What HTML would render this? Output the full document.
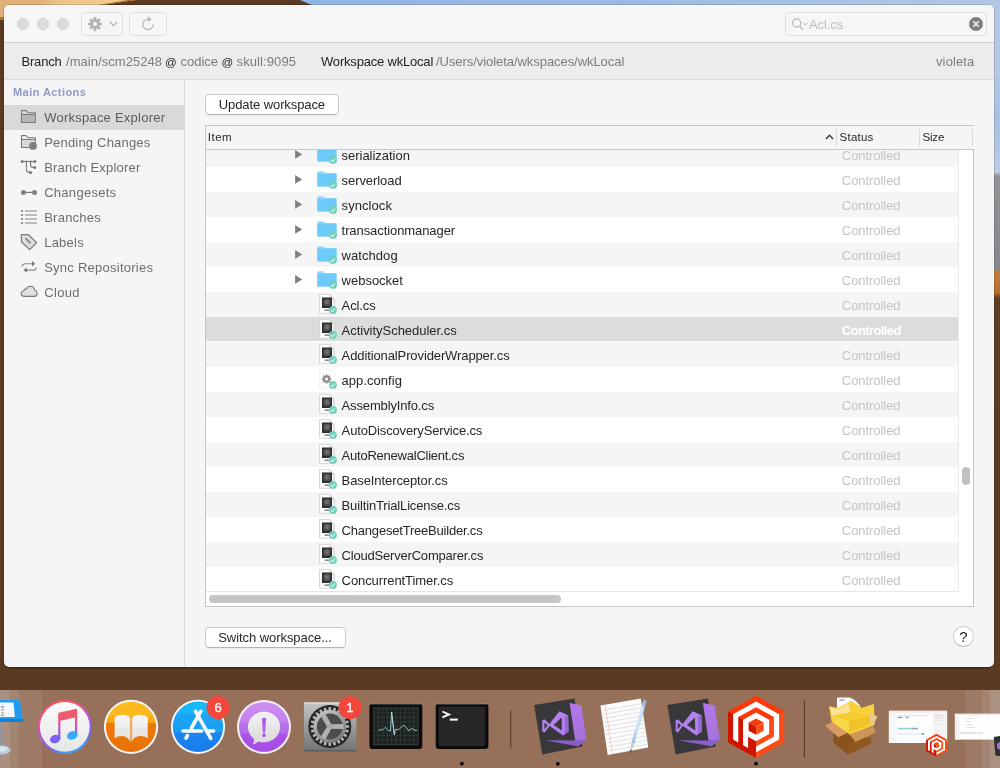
<!DOCTYPE html>
<html>
<head>
<meta charset="utf-8">
<title>Plastic SCM</title>
<style>
*{box-sizing:border-box;margin:0;padding:0}
html,body{width:1000px;height:768px;overflow:hidden}
body{font-family:"Liberation Sans",sans-serif;font-size:13px;color:#262626;background:#5a3a23;position:relative}
.abs,.t{position:absolute}
.t{white-space:pre}
#root{position:absolute;left:0;top:0;width:1000px;height:768px;will-change:transform}
svg{position:absolute;overflow:visible}

</style>
</head>
<body>
<div id="root">

<div class="abs" style="left:0;top:0;width:1000px;height:26px;background:linear-gradient(90deg,#e0ad77 0,#e1af7a 40px,#ecc58b 60px,#efc98f 100px,#f0cb92 135px)"></div>
<div class="abs" style="left:296px;top:0;width:704px;height:26px;background:linear-gradient(90deg,#90b4e1 0,#9dbbe2 314px,#a9c2e3 534px,#b3c7e4 704px)"></div>
<svg style="left:0;top:0" width="1000" height="26"><polygon points="136,0 300,0 314,6 96,6" fill="#5a3a23"/><polygon points="136,0 128,0 92,6 96,6" fill="#a8691f"/></svg>
<div class="abs" style="left:0;top:19px;width:8px;height:680px;background:#5a3a23"></div>
<div class="abs" style="left:0;top:17px;width:8px;height:3px;background:#b07820"></div>
<div class="abs" style="left:988px;top:0;width:12px;height:700px;background:linear-gradient(180deg,#b3c7e4 0,#b6c9e5 70px,#a9c0e0 120px,#bccde7 172px,#939296 176px,#87868b 268px,#c27c38 273px,#b56d2b 293px,#5e3d25 298px,#5a3a23 700px)"></div>
<div class="abs" style="left:0;top:655px;width:1000px;height:35px;background:#5b3a23"></div>
<div class="abs" style="left:5px;top:664px;width:988px;height:4.5px;border-radius:0 0 6px 6px;background:#4a2d19"></div>

<div class="abs" style="left:4px;top:5px;width:990px;height:662px;background:#f5f5f5;border-radius:5px;box-shadow:0 0 0 0.5px rgba(0,0,0,.25)"></div>
<div class="abs" style="left:4px;top:5px;width:990px;height:37px;background:#f6f6f6;border-radius:5px 5px 0 0"></div>
<div class="abs" style="left:4px;top:42px;width:990px;height:1px;background:#d1d1d1"></div>
<div class="abs" style="left:17px;top:18px;width:12px;height:12px;border-radius:50%;background:#dcdddd;border:1px solid #d1d2d2"></div>
<div class="abs" style="left:37px;top:18px;width:12px;height:12px;border-radius:50%;background:#dcdddd;border:1px solid #d1d2d2"></div>
<div class="abs" style="left:57px;top:18px;width:12px;height:12px;border-radius:50%;background:#dcdddd;border:1px solid #d1d2d2"></div>
<div class="abs" style="left:81px;top:12px;width:42px;height:24px;border:1px solid #dfdfdf;border-radius:5px;background:#f6f6f6"></div>
<div class="abs" style="left:129px;top:12px;width:38px;height:24px;border:1px solid #dfdfdf;border-radius:5px;background:#f6f6f6"></div>
<svg style="left:88px;top:17px" width="14" height="14" viewBox="-7 -7 14 14"><g fill="#b4b4b4"><rect x="-1.3" y="-7" width="2.6" height="4" transform="rotate(0)"/><rect x="-1.3" y="-7" width="2.6" height="4" transform="rotate(45)"/><rect x="-1.3" y="-7" width="2.6" height="4" transform="rotate(90)"/><rect x="-1.3" y="-7" width="2.6" height="4" transform="rotate(135)"/><rect x="-1.3" y="-7" width="2.6" height="4" transform="rotate(180)"/><rect x="-1.3" y="-7" width="2.6" height="4" transform="rotate(225)"/><rect x="-1.3" y="-7" width="2.6" height="4" transform="rotate(270)"/><rect x="-1.3" y="-7" width="2.6" height="4" transform="rotate(315)"/><circle r="4.9"/></g><circle r="2" fill="#f6f6f6"/></svg>
<svg style="left:109px;top:21px" width="9" height="6" viewBox="0 0 9 6"><path d="M0.8 0.8 L4.5 4.6 L8.2 0.8" fill="none" stroke="#b0b0b0" stroke-width="1.3"/></svg>
<svg style="left:141px;top:16px" width="14" height="15" viewBox="0 0 14 15"><path d="M7 3.2 A5.2 5.2 0 1 0 12.2 8.4" fill="none" stroke="#b4b4b4" stroke-width="1.1"/><path d="M6.8 0.6 L10.6 3.2 L6.8 5.8 Z" fill="#b4b4b4"/></svg>
<div class="abs" style="left:785px;top:12px;width:202px;height:24px;border:1px solid #dcdcdc;border-radius:5px;background:#f6f6f6"></div>
<svg style="left:791px;top:17px" width="18" height="14" viewBox="0 0 18 14"><circle cx="5.6" cy="6" r="4.1" fill="none" stroke="#b2b2b2" stroke-width="1.1"/><path d="M8.6 9.2 L12 12.6" stroke="#b2b2b2" stroke-width="1.2" fill="none"/><path d="M12.4 6 L14.4 8 L16.4 6" fill="none" stroke="#b2b2b2" stroke-width="1"/></svg>
<span class="t " style="left:809px;top:17px;font-size:13px;line-height:15px;letter-spacing:-0.074px;color:#bdbdbd;">Acl.cs</span>
<svg style="left:969px;top:17px" width="14" height="14" viewBox="0 0 14 14"><circle cx="7" cy="7" r="7" fill="#7f7f7f"/><path d="M4.3 4.3 L9.7 9.7 M9.7 4.3 L4.3 9.7" stroke="#f6f6f6" stroke-width="1.5"/></svg>
<div class="abs" style="left:4px;top:43px;width:990px;height:36px;background:#ececec"></div>
<div class="abs" style="left:4px;top:79px;width:990px;height:1px;background:#dbdbdb"></div>
<span class="t " style="left:21.5px;top:54px;font-size:13px;line-height:15px;letter-spacing:-0.201px;color:#222222;">Branch</span>
<span class="t " style="left:66px;top:54px;font-size:13px;line-height:15px;letter-spacing:0.047px;color:#7c7c7c;">/main/scm25248</span>
<span class="t " style="left:165px;top:54.5px;font-size:11.5px;line-height:15px;color:#222222;">@</span>
<span class="t " style="left:180.5px;top:54px;font-size:13px;line-height:15px;letter-spacing:0.004px;color:#7c7c7c;">codice</span>
<span class="t " style="left:221.5px;top:54.5px;font-size:11.5px;line-height:15px;color:#222222;">@</span>
<span class="t " style="left:236.6px;top:54px;font-size:13px;line-height:15px;letter-spacing:0.095px;color:#7c7c7c;">skull:9095</span>
<span class="t " style="left:321px;top:54px;font-size:13px;line-height:15px;letter-spacing:-0.192px;color:#222222;">Workspace wkLocal</span>
<span class="t " style="left:436px;top:54px;font-size:13px;line-height:15px;letter-spacing:-0.058px;color:#7c7c7c;">/Users/violeta/wkspaces/wkLocal</span>
<span class="t " style="left:936px;top:54px;font-size:13px;line-height:15px;letter-spacing:0.120px;color:#7c7c7c;">violeta</span>
<div class="abs" style="left:184px;top:80px;width:1px;height:587px;background:#dcdcdc"></div>
<div class="abs" style="left:4px;top:105px;width:180px;height:25px;background:#d9d9d9"></div>
<span class="t " style="left:13px;top:84.5px;font-size:11px;line-height:15px;letter-spacing:0.441px;color:#9199c7;font-weight:700;">Main Actions</span>
<span class="t " style="left:44.2px;top:110px;font-size:13px;line-height:15px;letter-spacing:0.235px;color:#5c5c5c;">Workspace Explorer</span>
<span class="t " style="left:44.2px;top:135px;font-size:13px;line-height:15px;letter-spacing:0.196px;color:#6d6d6d;">Pending Changes</span>
<span class="t " style="left:44.2px;top:160px;font-size:13px;line-height:15px;letter-spacing:0.213px;color:#6d6d6d;">Branch Explorer</span>
<span class="t " style="left:44.2px;top:185px;font-size:13px;line-height:15px;letter-spacing:0.279px;color:#6d6d6d;">Changesets</span>
<span class="t " style="left:44.2px;top:210px;font-size:13px;line-height:15px;letter-spacing:0.240px;color:#6d6d6d;">Branches</span>
<span class="t " style="left:44.2px;top:235px;font-size:13px;line-height:15px;letter-spacing:0.237px;color:#6d6d6d;">Labels</span>
<span class="t " style="left:44.2px;top:260px;font-size:13px;line-height:15px;letter-spacing:0.251px;color:#6d6d6d;">Sync Repositories</span>
<span class="t " style="left:44.2px;top:285px;font-size:13px;line-height:15px;letter-spacing:0.345px;color:#6d6d6d;">Cloud</span>
<svg style="left:20px;top:109px" width="18" height="16" viewBox="0 0 18 16"><path d="M1.5 1.6 L5.8 1.6 L8.2 3.7 L15.4 3.7 L15.4 13.4 L1.5 13.4 Z" fill="#dfdfdf" stroke="#7a7a7a" stroke-width="1.1" stroke-linejoin="round"/><rect x="2" y="5.6" width="12.9" height="7.3" fill="#b4b6b5"/><path d="M1.5 5.4 L15.4 5.4" stroke="#7a7a7a" stroke-width="1.1"/></svg>
<svg style="left:20px;top:134px" width="18" height="16" viewBox="0 0 18 16"><path d="M1.5 1.6 L5.8 1.6 L8.2 3.7 L15.4 3.7 L15.4 13.4 L1.5 13.4 Z" fill="#fafafa" stroke="#7a7a7a" stroke-width="1.1" stroke-linejoin="round"/><rect x="2" y="5.6" width="12.9" height="7.3" fill="#d6d6d6"/><path d="M1.5 5.4 L15.4 5.4" stroke="#7a7a7a" stroke-width="1.1"/><circle cx="13" cy="11.9" r="3.9" fill="#808080"/></svg>
<svg style="left:20px;top:155px" width="18" height="20" viewBox="0 0 18 20"><g fill="none" stroke="#7a7a7a" stroke-width="1.1"><path d="M2.1 6.5 L14.8 6.5"/><path d="M6.4 6.5 L6.4 14.6 Q6.4 17.4 9.4 17.4 L10.6 17.4"/><path d="M10.6 6.5 L10.6 10.2 Q10.6 12.4 13 12.4 L14.7 12.4"/></g><g fill="#7a7a7a"><circle cx="2.2" cy="6.5" r="1.5"/><circle cx="14.8" cy="6.5" r="1.5"/><circle cx="6.4" cy="6.5" r="1"/><circle cx="10.6" cy="6.5" r="1"/><circle cx="14.7" cy="12.4" r="1.5"/><circle cx="10.6" cy="17.4" r="1.5"/></g></svg>
<svg style="left:20px;top:185px" width="18" height="14" viewBox="0 0 18 14"><path d="M3.4 7.4 L14.5 7.4" stroke="#7a7a7a" stroke-width="1.2"/><circle cx="3.4" cy="7.4" r="2.5" fill="#808080"/><circle cx="14.5" cy="7.4" r="2.5" fill="#808080"/></svg>
<svg style="left:20px;top:205px" width="18" height="22" viewBox="0 0 18 22"><rect x="1" y="5.1" width="1.9" height="1.8" fill="#858585"/><rect x="5" y="5.2" width="11.9" height="1.6" fill="#adadad"/><rect x="1" y="9.1" width="1.9" height="1.8" fill="#858585"/><rect x="5" y="9.2" width="11.9" height="1.6" fill="#adadad"/><rect x="1" y="13.1" width="1.9" height="1.8" fill="#858585"/><rect x="5" y="13.2" width="11.9" height="1.6" fill="#adadad"/><rect x="1" y="17.1" width="1.9" height="1.8" fill="#858585"/><rect x="5" y="17.2" width="11.9" height="1.6" fill="#adadad"/></svg>
<svg style="left:20px;top:230px" width="18" height="22" viewBox="0 0 18 22"><path d="M1.4 4.7 L8.4 4.7 L16.6 12.6 L9.6 19.6 L1.4 11.8 Z" fill="#dedede" stroke="#7a7a7a" stroke-width="1.2" stroke-linejoin="round"/><path d="M6.1 8.9 L10 12.6" stroke="#808080" stroke-width="1.7" stroke-linecap="round"/></svg>
<svg style="left:20px;top:255px" width="18" height="22" viewBox="0 0 18 22"><g fill="none" stroke="#8a8a8a" stroke-width="1.1"><path d="M2.2 11.6 Q2.4 8.8 5.4 8.8 L12.5 8.8"/><path d="M16.3 12.4 Q16.1 15.1 13.2 15.1 L6.4 15.1"/></g><path d="M12 6.1 L15.3 8.8 L12 11.5 Z" fill="#7a7a7a"/><path d="M6.8 12.4 L3.4 15.1 L6.8 17.8 Z" fill="#7a7a7a"/></svg>
<svg style="left:20px;top:280px" width="19" height="20" viewBox="0 0 19 20"><path d="M4 16.4 Q1.2 16.4 1.2 13.7 Q1.2 11.4 3.6 11 Q4 8.8 6.2 8.9 Q7.4 6.3 10.4 6.3 Q14 6.3 14.6 10.2 Q17.1 10.6 17.1 13.4 Q17.1 16.4 14.2 16.4 Z" fill="#e0e0e0" stroke="#7a7a7a" stroke-width="1.1" stroke-linejoin="round"/></svg>
<div class="abs" style="left:205px;top:94px;width:133.6px;height:20.6px;background:#fff;border:1px solid #c9c9c9;border-bottom-color:#b4b4b4;border-radius:4.5px;box-shadow:0 0.5px 0.5px rgba(0,0,0,.08)"></div>
<span class="t " style="left:218.8px;top:96.5px;font-size:13px;line-height:15px;letter-spacing:-0.091px;color:#262626;">Update workspace</span>
<div class="abs" style="left:205px;top:627.2px;width:140.8px;height:20.6px;background:#fff;border:1px solid #c9c9c9;border-bottom-color:#b4b4b4;border-radius:4.5px;box-shadow:0 0.5px 0.5px rgba(0,0,0,.08)"></div>
<span class="t " style="left:218.2px;top:629.7px;font-size:13px;line-height:15px;letter-spacing:-0.060px;color:#262626;">Switch workspace...</span>
<div class="abs" style="left:953px;top:626px;width:21px;height:21px;background:#fff;border:1px solid #cdcdcd;border-bottom-color:#b9b9b9;border-radius:50%"></div>
<span class="t " style="left:959.2px;top:627.9px;font-size:15px;line-height:17px;color:#262626;">?</span>
<div class="abs" style="left:205px;top:125px;width:769px;height:482px;background:#fff;border:1px solid #c6c6c6"></div>
<div class="abs" style="left:206px;top:126px;width:767px;height:23px;background:#f5f5f5"></div>
<div class="abs" style="left:206px;top:149px;width:767px;height:1px;background:#c9c9c9"></div>
<div class="abs" style="left:973px;top:126px;width:1px;height:23px;background:#f5f5f5"></div>
<div class="abs" style="left:836px;top:129px;width:1px;height:17px;background:#dadada"></div>
<div class="abs" style="left:919px;top:129px;width:1px;height:17px;background:#dadada"></div>
<div class="abs" style="left:972px;top:129px;width:1px;height:17px;background:#dadada"></div>
<span class="t " style="left:207.8px;top:130px;font-size:11.5px;line-height:14px;letter-spacing:0.475px;color:#262626;">Item</span>
<span class="t " style="left:839.6px;top:130px;font-size:11.5px;line-height:14px;letter-spacing:0.218px;color:#262626;">Status</span>
<span class="t " style="left:922.6px;top:130px;font-size:11.5px;line-height:14px;letter-spacing:-0.225px;color:#262626;">Size</span>
<svg style="left:825px;top:134px" width="9" height="6" viewBox="0 0 9 6"><path d="M1 5 L4.5 1.3 L8 5" fill="none" stroke="#3a3a3a" stroke-width="1.4"/></svg>
<div class="abs" style="left:206px;top:150px;width:752px;height:442px;overflow:hidden">
<svg width="0" height="0"><defs><radialGradient id="mon" cx="50%" cy="45%" r="65%"><stop offset="0" stop-color="#7a7a7a"/><stop offset="1" stop-color="#3c3c3c"/></radialGradient></defs></svg>
<div class="abs" style="left:0;top:-8px;width:752px;height:25px;background:#f5f5f5"></div>
<span class="t " style="left:135.60000000000002px;top:-2px;font-size:13px;line-height:15px;letter-spacing:-0.030px;color:#262626;">serialization</span>
<span class="t " style="left:635.8px;top:-2px;font-size:13px;line-height:15px;letter-spacing:-0.052px;color:#c4c4c4;">Controlled</span>
<svg style="left:89px;top:0px" width="8" height="10" viewBox="0 0 8 10"><path d="M0.1 0.1 L7.2 4.45 L0.1 8.8 Z" fill="#7e7e7e"/></svg>
<svg style="left:111px;top:-4px" width="21" height="20" viewBox="0 0 21 20"><path d="M0.3 1.2 Q0.3 0.2 1.3 0.2 L6.2 0.2 Q7 0.2 7.4 0.9 L8 2 L18.5 2 Q19.5 2 19.5 3 L19.5 14.4 Q19.5 15.4 18.5 15.4 L1.3 15.4 Q0.3 15.4 0.3 14.4 Z" fill="#9cdafa"/><path d="M0.3 2.6 L19.5 2.6 L19.5 14.4 Q19.5 15.4 18.5 15.4 L1.3 15.4 Q0.3 15.4 0.3 14.4 Z" fill="#6ccbf8"/><circle cx="16" cy="13.9" r="3.9" fill="#6ecfbb"/><path d="M13.9 14.1 l1.5 1.6 l2.7 -3.2" fill="none" stroke="#dcf7f0" stroke-width="1.05"/></svg>
<div class="abs" style="left:0;top:17px;width:752px;height:25px;background:#ffffff"></div>
<span class="t " style="left:135.60000000000002px;top:23px;font-size:13px;line-height:15px;letter-spacing:-0.073px;color:#262626;">serverload</span>
<span class="t " style="left:635.8px;top:23px;font-size:13px;line-height:15px;letter-spacing:-0.052px;color:#c4c4c4;">Controlled</span>
<svg style="left:89px;top:25px" width="8" height="10" viewBox="0 0 8 10"><path d="M0.1 0.1 L7.2 4.45 L0.1 8.8 Z" fill="#7e7e7e"/></svg>
<svg style="left:111px;top:21px" width="21" height="20" viewBox="0 0 21 20"><path d="M0.3 1.2 Q0.3 0.2 1.3 0.2 L6.2 0.2 Q7 0.2 7.4 0.9 L8 2 L18.5 2 Q19.5 2 19.5 3 L19.5 14.4 Q19.5 15.4 18.5 15.4 L1.3 15.4 Q0.3 15.4 0.3 14.4 Z" fill="#9cdafa"/><path d="M0.3 2.6 L19.5 2.6 L19.5 14.4 Q19.5 15.4 18.5 15.4 L1.3 15.4 Q0.3 15.4 0.3 14.4 Z" fill="#6ccbf8"/><circle cx="16" cy="13.9" r="3.9" fill="#6ecfbb"/><path d="M13.9 14.1 l1.5 1.6 l2.7 -3.2" fill="none" stroke="#dcf7f0" stroke-width="1.05"/></svg>
<div class="abs" style="left:0;top:42px;width:752px;height:25px;background:#f5f5f5"></div>
<span class="t " style="left:135.60000000000002px;top:48px;font-size:13px;line-height:15px;letter-spacing:0.063px;color:#262626;">synclock</span>
<span class="t " style="left:635.8px;top:48px;font-size:13px;line-height:15px;letter-spacing:-0.052px;color:#c4c4c4;">Controlled</span>
<svg style="left:89px;top:50px" width="8" height="10" viewBox="0 0 8 10"><path d="M0.1 0.1 L7.2 4.45 L0.1 8.8 Z" fill="#7e7e7e"/></svg>
<svg style="left:111px;top:46px" width="21" height="20" viewBox="0 0 21 20"><path d="M0.3 1.2 Q0.3 0.2 1.3 0.2 L6.2 0.2 Q7 0.2 7.4 0.9 L8 2 L18.5 2 Q19.5 2 19.5 3 L19.5 14.4 Q19.5 15.4 18.5 15.4 L1.3 15.4 Q0.3 15.4 0.3 14.4 Z" fill="#9cdafa"/><path d="M0.3 2.6 L19.5 2.6 L19.5 14.4 Q19.5 15.4 18.5 15.4 L1.3 15.4 Q0.3 15.4 0.3 14.4 Z" fill="#6ccbf8"/><circle cx="16" cy="13.9" r="3.9" fill="#6ecfbb"/><path d="M13.9 14.1 l1.5 1.6 l2.7 -3.2" fill="none" stroke="#dcf7f0" stroke-width="1.05"/></svg>
<div class="abs" style="left:0;top:67px;width:752px;height:25px;background:#ffffff"></div>
<span class="t " style="left:135.60000000000002px;top:73px;font-size:13px;line-height:15px;letter-spacing:-0.080px;color:#262626;">transactionmanager</span>
<span class="t " style="left:635.8px;top:73px;font-size:13px;line-height:15px;letter-spacing:-0.052px;color:#c4c4c4;">Controlled</span>
<svg style="left:89px;top:75px" width="8" height="10" viewBox="0 0 8 10"><path d="M0.1 0.1 L7.2 4.45 L0.1 8.8 Z" fill="#7e7e7e"/></svg>
<svg style="left:111px;top:71px" width="21" height="20" viewBox="0 0 21 20"><path d="M0.3 1.2 Q0.3 0.2 1.3 0.2 L6.2 0.2 Q7 0.2 7.4 0.9 L8 2 L18.5 2 Q19.5 2 19.5 3 L19.5 14.4 Q19.5 15.4 18.5 15.4 L1.3 15.4 Q0.3 15.4 0.3 14.4 Z" fill="#9cdafa"/><path d="M0.3 2.6 L19.5 2.6 L19.5 14.4 Q19.5 15.4 18.5 15.4 L1.3 15.4 Q0.3 15.4 0.3 14.4 Z" fill="#6ccbf8"/><circle cx="16" cy="13.9" r="3.9" fill="#6ecfbb"/><path d="M13.9 14.1 l1.5 1.6 l2.7 -3.2" fill="none" stroke="#dcf7f0" stroke-width="1.05"/></svg>
<div class="abs" style="left:0;top:92px;width:752px;height:25px;background:#f5f5f5"></div>
<span class="t " style="left:135.60000000000002px;top:98px;font-size:13px;line-height:15px;letter-spacing:0.056px;color:#262626;">watchdog</span>
<span class="t " style="left:635.8px;top:98px;font-size:13px;line-height:15px;letter-spacing:-0.052px;color:#c4c4c4;">Controlled</span>
<svg style="left:89px;top:100px" width="8" height="10" viewBox="0 0 8 10"><path d="M0.1 0.1 L7.2 4.45 L0.1 8.8 Z" fill="#7e7e7e"/></svg>
<svg style="left:111px;top:96px" width="21" height="20" viewBox="0 0 21 20"><path d="M0.3 1.2 Q0.3 0.2 1.3 0.2 L6.2 0.2 Q7 0.2 7.4 0.9 L8 2 L18.5 2 Q19.5 2 19.5 3 L19.5 14.4 Q19.5 15.4 18.5 15.4 L1.3 15.4 Q0.3 15.4 0.3 14.4 Z" fill="#9cdafa"/><path d="M0.3 2.6 L19.5 2.6 L19.5 14.4 Q19.5 15.4 18.5 15.4 L1.3 15.4 Q0.3 15.4 0.3 14.4 Z" fill="#6ccbf8"/><circle cx="16" cy="13.9" r="3.9" fill="#6ecfbb"/><path d="M13.9 14.1 l1.5 1.6 l2.7 -3.2" fill="none" stroke="#dcf7f0" stroke-width="1.05"/></svg>
<div class="abs" style="left:0;top:117px;width:752px;height:25px;background:#ffffff"></div>
<span class="t " style="left:135.60000000000002px;top:123px;font-size:13px;line-height:15px;letter-spacing:-0.015px;color:#262626;">websocket</span>
<span class="t " style="left:635.8px;top:123px;font-size:13px;line-height:15px;letter-spacing:-0.052px;color:#c4c4c4;">Controlled</span>
<svg style="left:89px;top:125px" width="8" height="10" viewBox="0 0 8 10"><path d="M0.1 0.1 L7.2 4.45 L0.1 8.8 Z" fill="#7e7e7e"/></svg>
<svg style="left:111px;top:121px" width="21" height="20" viewBox="0 0 21 20"><path d="M0.3 1.2 Q0.3 0.2 1.3 0.2 L6.2 0.2 Q7 0.2 7.4 0.9 L8 2 L18.5 2 Q19.5 2 19.5 3 L19.5 14.4 Q19.5 15.4 18.5 15.4 L1.3 15.4 Q0.3 15.4 0.3 14.4 Z" fill="#9cdafa"/><path d="M0.3 2.6 L19.5 2.6 L19.5 14.4 Q19.5 15.4 18.5 15.4 L1.3 15.4 Q0.3 15.4 0.3 14.4 Z" fill="#6ccbf8"/><circle cx="16" cy="13.9" r="3.9" fill="#6ecfbb"/><path d="M13.9 14.1 l1.5 1.6 l2.7 -3.2" fill="none" stroke="#dcf7f0" stroke-width="1.05"/></svg>
<div class="abs" style="left:0;top:142px;width:752px;height:25px;background:#f5f5f5"></div>
<span class="t " style="left:135.60000000000002px;top:148px;font-size:13px;line-height:15px;letter-spacing:-0.124px;color:#262626;">Acl.cs</span>
<span class="t " style="left:635.8px;top:148px;font-size:13px;line-height:15px;letter-spacing:-0.052px;color:#c4c4c4;">Controlled</span>
<svg style="left:113px;top:144px" width="19" height="22" viewBox="0 0 19 22"><path d="M0.5 0.4 L10.6 0.4 L15.4 5.2 L15.4 19.3 L0.5 19.3 Z" fill="#fcfcfc" stroke="#cfcfcf" stroke-width="0.8"/><path d="M14.2 5.2 L15.4 5.2 L15.4 19.3 L14.2 19.3 Z" fill="#dedede"/><path d="M10.6 0.4 L10.6 5.2 L15.4 5.2 Z" fill="#ededed" stroke="#cfcfcf" stroke-width="0.6"/><rect x="3" y="3.5" width="10" height="10.5" fill="#2f2f2f"/><rect x="4.4" y="4.9" width="7.2" height="7.2" fill="url(#mon)"/><rect x="5.6" y="15.4" width="4.6" height="1.6" fill="#8c8c8c"/><circle cx="14" cy="15.9" r="3.9" fill="#6ecfbb"/><path d="M11.9 16.1 l1.5 1.6 l2.7 -3.2" fill="none" stroke="#dcf7f0" stroke-width="1.05"/></svg>
<div class="abs" style="left:0;top:167px;width:752px;height:24px;background:#dbdcdc"></div>
<span class="t " style="left:135.60000000000002px;top:173px;font-size:13px;line-height:15px;letter-spacing:-0.029px;color:#262626;">ActivityScheduler.cs</span>
<span class="t " style="left:635.8px;top:173px;font-size:13px;line-height:15px;letter-spacing:-0.600px;color:#ffffff;font-weight:700;">Controlled</span>
<svg style="left:113px;top:169px" width="19" height="22" viewBox="0 0 19 22"><path d="M0.5 0.4 L10.6 0.4 L15.4 5.2 L15.4 19.3 L0.5 19.3 Z" fill="#fcfcfc" stroke="#cfcfcf" stroke-width="0.8"/><path d="M14.2 5.2 L15.4 5.2 L15.4 19.3 L14.2 19.3 Z" fill="#dedede"/><path d="M10.6 0.4 L10.6 5.2 L15.4 5.2 Z" fill="#ededed" stroke="#cfcfcf" stroke-width="0.6"/><rect x="3" y="3.5" width="10" height="10.5" fill="#2f2f2f"/><rect x="4.4" y="4.9" width="7.2" height="7.2" fill="url(#mon)"/><rect x="5.6" y="15.4" width="4.6" height="1.6" fill="#8c8c8c"/><circle cx="14" cy="15.9" r="3.9" fill="#6ecfbb"/><path d="M11.9 16.1 l1.5 1.6 l2.7 -3.2" fill="none" stroke="#dcf7f0" stroke-width="1.05"/></svg>
<div class="abs" style="left:0;top:192px;width:752px;height:25px;background:#f5f5f5"></div>
<span class="t " style="left:135.60000000000002px;top:198px;font-size:13px;line-height:15px;letter-spacing:-0.110px;color:#262626;">AdditionalProviderWrapper.cs</span>
<span class="t " style="left:635.8px;top:198px;font-size:13px;line-height:15px;letter-spacing:-0.052px;color:#c4c4c4;">Controlled</span>
<svg style="left:113px;top:194px" width="19" height="22" viewBox="0 0 19 22"><path d="M0.5 0.4 L10.6 0.4 L15.4 5.2 L15.4 19.3 L0.5 19.3 Z" fill="#fcfcfc" stroke="#cfcfcf" stroke-width="0.8"/><path d="M14.2 5.2 L15.4 5.2 L15.4 19.3 L14.2 19.3 Z" fill="#dedede"/><path d="M10.6 0.4 L10.6 5.2 L15.4 5.2 Z" fill="#ededed" stroke="#cfcfcf" stroke-width="0.6"/><rect x="3" y="3.5" width="10" height="10.5" fill="#2f2f2f"/><rect x="4.4" y="4.9" width="7.2" height="7.2" fill="url(#mon)"/><rect x="5.6" y="15.4" width="4.6" height="1.6" fill="#8c8c8c"/><circle cx="14" cy="15.9" r="3.9" fill="#6ecfbb"/><path d="M11.9 16.1 l1.5 1.6 l2.7 -3.2" fill="none" stroke="#dcf7f0" stroke-width="1.05"/></svg>
<div class="abs" style="left:0;top:217px;width:752px;height:25px;background:#ffffff"></div>
<span class="t " style="left:135.60000000000002px;top:223px;font-size:13px;line-height:15px;letter-spacing:0.033px;color:#262626;">app.config</span>
<span class="t " style="left:635.8px;top:223px;font-size:13px;line-height:15px;letter-spacing:-0.052px;color:#c4c4c4;">Controlled</span>
<svg style="left:113px;top:219px" width="19" height="22" viewBox="0 0 19 22"><path d="M0.5 0.4 L10.6 0.4 L15.4 5.2 L15.4 19.3 L0.5 19.3 Z" fill="#ffffff" stroke="#f0f0f0" stroke-width="0.8"/><g transform="translate(7.6,10)" fill="#8a8a8a"><rect x="-0.9" y="-4.6" width="1.8" height="2.6" transform="rotate(0)"/><rect x="-0.9" y="-4.6" width="1.8" height="2.6" transform="rotate(45)"/><rect x="-0.9" y="-4.6" width="1.8" height="2.6" transform="rotate(90)"/><rect x="-0.9" y="-4.6" width="1.8" height="2.6" transform="rotate(135)"/><rect x="-0.9" y="-4.6" width="1.8" height="2.6" transform="rotate(180)"/><rect x="-0.9" y="-4.6" width="1.8" height="2.6" transform="rotate(225)"/><rect x="-0.9" y="-4.6" width="1.8" height="2.6" transform="rotate(270)"/><rect x="-0.9" y="-4.6" width="1.8" height="2.6" transform="rotate(315)"/><circle r="3.3"/><circle r="1.5" fill="#fff"/></g><circle cx="14" cy="15.9" r="3.9" fill="#6ecfbb"/><path d="M11.9 16.1 l1.5 1.6 l2.7 -3.2" fill="none" stroke="#dcf7f0" stroke-width="1.05"/></svg>
<div class="abs" style="left:0;top:242px;width:752px;height:25px;background:#f5f5f5"></div>
<span class="t " style="left:135.60000000000002px;top:248px;font-size:13px;line-height:15px;letter-spacing:-0.150px;color:#262626;">AssemblyInfo.cs</span>
<span class="t " style="left:635.8px;top:248px;font-size:13px;line-height:15px;letter-spacing:-0.052px;color:#c4c4c4;">Controlled</span>
<svg style="left:113px;top:244px" width="19" height="22" viewBox="0 0 19 22"><path d="M0.5 0.4 L10.6 0.4 L15.4 5.2 L15.4 19.3 L0.5 19.3 Z" fill="#fcfcfc" stroke="#cfcfcf" stroke-width="0.8"/><path d="M14.2 5.2 L15.4 5.2 L15.4 19.3 L14.2 19.3 Z" fill="#dedede"/><path d="M10.6 0.4 L10.6 5.2 L15.4 5.2 Z" fill="#ededed" stroke="#cfcfcf" stroke-width="0.6"/><rect x="3" y="3.5" width="10" height="10.5" fill="#2f2f2f"/><rect x="4.4" y="4.9" width="7.2" height="7.2" fill="url(#mon)"/><rect x="5.6" y="15.4" width="4.6" height="1.6" fill="#8c8c8c"/><circle cx="14" cy="15.9" r="3.9" fill="#6ecfbb"/><path d="M11.9 16.1 l1.5 1.6 l2.7 -3.2" fill="none" stroke="#dcf7f0" stroke-width="1.05"/></svg>
<div class="abs" style="left:0;top:267px;width:752px;height:25px;background:#ffffff"></div>
<span class="t " style="left:135.60000000000002px;top:273px;font-size:13px;line-height:15px;letter-spacing:-0.136px;color:#262626;">AutoDiscoveryService.cs</span>
<span class="t " style="left:635.8px;top:273px;font-size:13px;line-height:15px;letter-spacing:-0.052px;color:#c4c4c4;">Controlled</span>
<svg style="left:113px;top:269px" width="19" height="22" viewBox="0 0 19 22"><path d="M0.5 0.4 L10.6 0.4 L15.4 5.2 L15.4 19.3 L0.5 19.3 Z" fill="#fcfcfc" stroke="#cfcfcf" stroke-width="0.8"/><path d="M14.2 5.2 L15.4 5.2 L15.4 19.3 L14.2 19.3 Z" fill="#dedede"/><path d="M10.6 0.4 L10.6 5.2 L15.4 5.2 Z" fill="#ededed" stroke="#cfcfcf" stroke-width="0.6"/><rect x="3" y="3.5" width="10" height="10.5" fill="#2f2f2f"/><rect x="4.4" y="4.9" width="7.2" height="7.2" fill="url(#mon)"/><rect x="5.6" y="15.4" width="4.6" height="1.6" fill="#8c8c8c"/><circle cx="14" cy="15.9" r="3.9" fill="#6ecfbb"/><path d="M11.9 16.1 l1.5 1.6 l2.7 -3.2" fill="none" stroke="#dcf7f0" stroke-width="1.05"/></svg>
<div class="abs" style="left:0;top:292px;width:752px;height:25px;background:#f5f5f5"></div>
<span class="t " style="left:135.60000000000002px;top:298px;font-size:13px;line-height:15px;letter-spacing:-0.231px;color:#262626;">AutoRenewalClient.cs</span>
<span class="t " style="left:635.8px;top:298px;font-size:13px;line-height:15px;letter-spacing:-0.052px;color:#c4c4c4;">Controlled</span>
<svg style="left:113px;top:294px" width="19" height="22" viewBox="0 0 19 22"><path d="M0.5 0.4 L10.6 0.4 L15.4 5.2 L15.4 19.3 L0.5 19.3 Z" fill="#fcfcfc" stroke="#cfcfcf" stroke-width="0.8"/><path d="M14.2 5.2 L15.4 5.2 L15.4 19.3 L14.2 19.3 Z" fill="#dedede"/><path d="M10.6 0.4 L10.6 5.2 L15.4 5.2 Z" fill="#ededed" stroke="#cfcfcf" stroke-width="0.6"/><rect x="3" y="3.5" width="10" height="10.5" fill="#2f2f2f"/><rect x="4.4" y="4.9" width="7.2" height="7.2" fill="url(#mon)"/><rect x="5.6" y="15.4" width="4.6" height="1.6" fill="#8c8c8c"/><circle cx="14" cy="15.9" r="3.9" fill="#6ecfbb"/><path d="M11.9 16.1 l1.5 1.6 l2.7 -3.2" fill="none" stroke="#dcf7f0" stroke-width="1.05"/></svg>
<div class="abs" style="left:0;top:317px;width:752px;height:25px;background:#ffffff"></div>
<span class="t " style="left:135.60000000000002px;top:323px;font-size:13px;line-height:15px;letter-spacing:-0.095px;color:#262626;">BaseInterceptor.cs</span>
<span class="t " style="left:635.8px;top:323px;font-size:13px;line-height:15px;letter-spacing:-0.052px;color:#c4c4c4;">Controlled</span>
<svg style="left:113px;top:319px" width="19" height="22" viewBox="0 0 19 22"><path d="M0.5 0.4 L10.6 0.4 L15.4 5.2 L15.4 19.3 L0.5 19.3 Z" fill="#fcfcfc" stroke="#cfcfcf" stroke-width="0.8"/><path d="M14.2 5.2 L15.4 5.2 L15.4 19.3 L14.2 19.3 Z" fill="#dedede"/><path d="M10.6 0.4 L10.6 5.2 L15.4 5.2 Z" fill="#ededed" stroke="#cfcfcf" stroke-width="0.6"/><rect x="3" y="3.5" width="10" height="10.5" fill="#2f2f2f"/><rect x="4.4" y="4.9" width="7.2" height="7.2" fill="url(#mon)"/><rect x="5.6" y="15.4" width="4.6" height="1.6" fill="#8c8c8c"/><circle cx="14" cy="15.9" r="3.9" fill="#6ecfbb"/><path d="M11.9 16.1 l1.5 1.6 l2.7 -3.2" fill="none" stroke="#dcf7f0" stroke-width="1.05"/></svg>
<div class="abs" style="left:0;top:342px;width:752px;height:25px;background:#f5f5f5"></div>
<span class="t " style="left:135.60000000000002px;top:348px;font-size:13px;line-height:15px;letter-spacing:-0.146px;color:#262626;">BuiltinTrialLicense.cs</span>
<span class="t " style="left:635.8px;top:348px;font-size:13px;line-height:15px;letter-spacing:-0.052px;color:#c4c4c4;">Controlled</span>
<svg style="left:113px;top:344px" width="19" height="22" viewBox="0 0 19 22"><path d="M0.5 0.4 L10.6 0.4 L15.4 5.2 L15.4 19.3 L0.5 19.3 Z" fill="#fcfcfc" stroke="#cfcfcf" stroke-width="0.8"/><path d="M14.2 5.2 L15.4 5.2 L15.4 19.3 L14.2 19.3 Z" fill="#dedede"/><path d="M10.6 0.4 L10.6 5.2 L15.4 5.2 Z" fill="#ededed" stroke="#cfcfcf" stroke-width="0.6"/><rect x="3" y="3.5" width="10" height="10.5" fill="#2f2f2f"/><rect x="4.4" y="4.9" width="7.2" height="7.2" fill="url(#mon)"/><rect x="5.6" y="15.4" width="4.6" height="1.6" fill="#8c8c8c"/><circle cx="14" cy="15.9" r="3.9" fill="#6ecfbb"/><path d="M11.9 16.1 l1.5 1.6 l2.7 -3.2" fill="none" stroke="#dcf7f0" stroke-width="1.05"/></svg>
<div class="abs" style="left:0;top:367px;width:752px;height:25px;background:#ffffff"></div>
<span class="t " style="left:135.60000000000002px;top:373px;font-size:13px;line-height:15px;letter-spacing:-0.202px;color:#262626;">ChangesetTreeBuilder.cs</span>
<span class="t " style="left:635.8px;top:373px;font-size:13px;line-height:15px;letter-spacing:-0.052px;color:#c4c4c4;">Controlled</span>
<svg style="left:113px;top:369px" width="19" height="22" viewBox="0 0 19 22"><path d="M0.5 0.4 L10.6 0.4 L15.4 5.2 L15.4 19.3 L0.5 19.3 Z" fill="#fcfcfc" stroke="#cfcfcf" stroke-width="0.8"/><path d="M14.2 5.2 L15.4 5.2 L15.4 19.3 L14.2 19.3 Z" fill="#dedede"/><path d="M10.6 0.4 L10.6 5.2 L15.4 5.2 Z" fill="#ededed" stroke="#cfcfcf" stroke-width="0.6"/><rect x="3" y="3.5" width="10" height="10.5" fill="#2f2f2f"/><rect x="4.4" y="4.9" width="7.2" height="7.2" fill="url(#mon)"/><rect x="5.6" y="15.4" width="4.6" height="1.6" fill="#8c8c8c"/><circle cx="14" cy="15.9" r="3.9" fill="#6ecfbb"/><path d="M11.9 16.1 l1.5 1.6 l2.7 -3.2" fill="none" stroke="#dcf7f0" stroke-width="1.05"/></svg>
<div class="abs" style="left:0;top:392px;width:752px;height:25px;background:#f5f5f5"></div>
<span class="t " style="left:135.60000000000002px;top:398px;font-size:13px;line-height:15px;letter-spacing:-0.198px;color:#262626;">CloudServerComparer.cs</span>
<span class="t " style="left:635.8px;top:398px;font-size:13px;line-height:15px;letter-spacing:-0.052px;color:#c4c4c4;">Controlled</span>
<svg style="left:113px;top:394px" width="19" height="22" viewBox="0 0 19 22"><path d="M0.5 0.4 L10.6 0.4 L15.4 5.2 L15.4 19.3 L0.5 19.3 Z" fill="#fcfcfc" stroke="#cfcfcf" stroke-width="0.8"/><path d="M14.2 5.2 L15.4 5.2 L15.4 19.3 L14.2 19.3 Z" fill="#dedede"/><path d="M10.6 0.4 L10.6 5.2 L15.4 5.2 Z" fill="#ededed" stroke="#cfcfcf" stroke-width="0.6"/><rect x="3" y="3.5" width="10" height="10.5" fill="#2f2f2f"/><rect x="4.4" y="4.9" width="7.2" height="7.2" fill="url(#mon)"/><rect x="5.6" y="15.4" width="4.6" height="1.6" fill="#8c8c8c"/><circle cx="14" cy="15.9" r="3.9" fill="#6ecfbb"/><path d="M11.9 16.1 l1.5 1.6 l2.7 -3.2" fill="none" stroke="#dcf7f0" stroke-width="1.05"/></svg>
<div class="abs" style="left:0;top:417px;width:752px;height:25px;background:#ffffff"></div>
<span class="t " style="left:135.60000000000002px;top:423px;font-size:13px;line-height:15px;letter-spacing:-0.082px;color:#262626;">ConcurrentTimer.cs</span>
<span class="t " style="left:635.8px;top:423px;font-size:13px;line-height:15px;letter-spacing:-0.052px;color:#c4c4c4;">Controlled</span>
<svg style="left:113px;top:419px" width="19" height="22" viewBox="0 0 19 22"><path d="M0.5 0.4 L10.6 0.4 L15.4 5.2 L15.4 19.3 L0.5 19.3 Z" fill="#fcfcfc" stroke="#cfcfcf" stroke-width="0.8"/><path d="M14.2 5.2 L15.4 5.2 L15.4 19.3 L14.2 19.3 Z" fill="#dedede"/><path d="M10.6 0.4 L10.6 5.2 L15.4 5.2 Z" fill="#ededed" stroke="#cfcfcf" stroke-width="0.6"/><rect x="3" y="3.5" width="10" height="10.5" fill="#2f2f2f"/><rect x="4.4" y="4.9" width="7.2" height="7.2" fill="url(#mon)"/><rect x="5.6" y="15.4" width="4.6" height="1.6" fill="#8c8c8c"/><circle cx="14" cy="15.9" r="3.9" fill="#6ecfbb"/><path d="M11.9 16.1 l1.5 1.6 l2.7 -3.2" fill="none" stroke="#dcf7f0" stroke-width="1.05"/></svg>
</div>
<div class="abs" style="left:958px;top:150px;width:1px;height:442px;background:#ebebeb"></div>
<div class="abs" style="left:206px;top:591px;width:753px;height:1px;background:#e6e6e6"></div>
<div class="abs" style="left:962px;top:467px;width:8px;height:18px;border-radius:4px;background:#c1c1c1"></div>
<div class="abs" style="left:209px;top:595px;width:352px;height:8px;border-radius:4px;background:#c6c6c6"></div>
<div class="abs" style="left:0;top:689.5px;width:1000px;height:79px;background:linear-gradient(90deg,#aa9080 0,#aa9080 10px,#a38672 10.5px,#a38672 19px,#9e7b66 19.5px,#9e7b66 42px,#97705a 42.5px,#97705a 964.5px,#9d7a66 965px,#9d7a66 982px,#a38572 982.5px,#a38572 990px,#ab917f 990.5px,#ab917f 1000px)"></div>
<svg style="left:0;top:0" width="1000" height="768" viewBox="0 0 1000 768"><defs>
<linearGradient id="itr" x1="0.3" y1="0" x2="0.72" y2="1"><stop offset="0" stop-color="#f6504e"/><stop offset="0.25" stop-color="#e8568c"/><stop offset="0.52" stop-color="#b056de"/><stop offset="0.75" stop-color="#7a62ee"/><stop offset="1" stop-color="#2ab6f8"/></linearGradient>
<linearGradient id="ith1" x1="0" y1="0" x2="0.6" y2="1"><stop offset="0" stop-color="#8e58f2"/><stop offset="1" stop-color="#6a6cf4"/></linearGradient>
<linearGradient id="ith2" x1="0" y1="0" x2="0.6" y2="1"><stop offset="0" stop-color="#4a96f6"/><stop offset="1" stop-color="#2cb8f8"/></linearGradient>
<linearGradient id="itn" x1="0" y1="0" x2="0" y2="1"><stop offset="0" stop-color="#f25a66"/><stop offset="0.36" stop-color="#ee5a78"/><stop offset="0.6" stop-color="#c25ac8"/><stop offset="0.85" stop-color="#8a5cf0"/><stop offset="1" stop-color="#6a70f4"/></linearGradient>
<linearGradient id="itw" x1="0" y1="0" x2="0" y2="1"><stop offset="0" stop-color="#fcfcfc"/><stop offset="1" stop-color="#e6e6e6"/></linearGradient>
<linearGradient id="ibk" x1="0" y1="0" x2="0" y2="1"><stop offset="0" stop-color="#fdbb1e"/><stop offset="0.27" stop-color="#fcb81c"/><stop offset="0.29" stop-color="#fbab15"/><stop offset="0.41" stop-color="#fba813"/><stop offset="0.43" stop-color="#ee7909"/><stop offset="1" stop-color="#e97207"/></linearGradient>
<linearGradient id="pg" x1="0" y1="0" x2="0" y2="1"><stop offset="0" stop-color="#f5f5f5"/><stop offset="0.45" stop-color="#f0f0f0"/><stop offset="0.5" stop-color="#e8e8e8"/><stop offset="1" stop-color="#e4e4e4"/></linearGradient>
<linearGradient id="aps" x1="0" y1="0" x2="0" y2="1"><stop offset="0" stop-color="#18bafa"/><stop offset="0.23" stop-color="#19b4f8"/><stop offset="0.25" stop-color="#1aa6f5"/><stop offset="0.6" stop-color="#1a9ef3"/><stop offset="0.62" stop-color="#1b86ef"/><stop offset="1" stop-color="#1b7aec"/></linearGradient>
<linearGradient id="fbk" x1="0" y1="0" x2="0" y2="1"><stop offset="0" stop-color="#cf90f2"/><stop offset="0.38" stop-color="#c482ee"/><stop offset="0.42" stop-color="#b973ec"/><stop offset="0.62" stop-color="#b46aea"/><stop offset="0.66" stop-color="#aa52e8"/><stop offset="1" stop-color="#a54ce6"/></linearGradient>
<linearGradient id="spg" x1="0" y1="0" x2="0" y2="1"><stop offset="0" stop-color="#c4c6c8"/><stop offset="1" stop-color="#707274"/></linearGradient>
<linearGradient id="bub" x1="0" y1="0" x2="0" y2="1"><stop offset="0" stop-color="#f3f3f3"/><stop offset="1" stop-color="#d9d9d9"/></linearGradient>
<linearGradient id="grg" x1="0.2" y1="0" x2="0.8" y2="1"><stop offset="0" stop-color="#c6c7c8"/><stop offset="1" stop-color="#747576"/></linearGradient>
<linearGradient id="vsp" x1="0" y1="0" x2="0.3" y2="1"><stop offset="0" stop-color="#b676ee"/><stop offset="1" stop-color="#a274d8"/></linearGradient>
<linearGradient id="pen" x1="0" y1="0" x2="1" y2="0"><stop offset="0" stop-color="#8fb4dc"/><stop offset="0.45" stop-color="#dcecfa"/><stop offset="1" stop-color="#7fa2cc"/></linearGradient>

</defs>
<path d="M0 700 L19.8 700 L23.2 722 L0 722 Z" fill="#1f9cf0"/><path d="M0 719 L22.8 719 L23.2 722 L0 722 Z" fill="#157fd6"/><path d="M0 702.6 L13.6 702.6 L14.8 717 L0 717 Z" fill="#f4f8fc"/><rect x="0" y="722" width="1.2" height="26" fill="#8e9aa6"/><ellipse cx="2" cy="750" rx="8.6" ry="4.4" fill="#b9cde0"/><ellipse cx="1.6" cy="749" rx="6" ry="2.6" fill="#d9e6f2"/>
<rect x="1" y="706" width="3" height="1.6" fill="#7aa0e0"/><rect x="1" y="709" width="3" height="1.6" fill="#e8a0b8"/><rect x="1" y="712" width="3" height="1.6" fill="#f0c060"/><rect x="1" y="714.6" width="3" height="1.4" fill="#60c0d8"/>
<circle cx="64.8" cy="726.8" r="27.2" fill="url(#itr)"/><circle cx="64.8" cy="726.8" r="24.9" fill="url(#itw)"/>
<path d="M58.2 714.2 Q58.2 712.9 59.5 712.6 L75.6 709.1 Q77.2 708.8 77.2 710.4 L77.2 735 L75 735 L75 717.6 L60.4 720.8 L60.4 738.6 L58.2 738.6 Z" fill="url(#itn)"/>
<ellipse cx="55.2" cy="739" rx="5.4" ry="4.1" transform="rotate(-18 55.2 739)" fill="url(#ith1)"/><ellipse cx="72.3" cy="735.5" rx="5.4" ry="4.1" transform="rotate(-18 72.3 735.5)" fill="url(#ith2)"/>
<circle cx="131" cy="726.8" r="27.1" fill="#f7f7f7"/><circle cx="131" cy="726.8" r="25.1" fill="url(#ibk)"/>
<path d="M114.6 717.4 Q116 715.6 122 714.8 Q127.4 714.6 130 717.4 L130 741 Q127.6 736.6 122.4 736 Q117.4 736 114.6 738.2 Z" fill="url(#pg)"/><path d="M147.7 717.4 Q146.3 715.6 140.3 714.8 Q134.9 714.6 132.1 717.4 L132.1 741 Q134.5 736.6 139.7 736 Q144.7 736 147.7 738.2 Z" fill="url(#pg)"/><path d="M130 718 L132.1 718 L132.1 741 L131.05 742 L130 741 Z" fill="#f1a962"/>
<circle cx="198" cy="726.8" r="27.1" fill="#f7f9fb"/><circle cx="198" cy="726.8" r="25.2" fill="url(#aps)"/>
<g stroke="#f6f9fd" stroke-width="3.6" stroke-linecap="round" fill="none"><path d="M195.6 711.4 L210.8 738.4"/><path d="M200.8 711.4 L191.4 728"/><path d="M183 731 L201.6 731"/><path d="M206.6 731 L213.6 731"/><path d="M187.4 735.6 L186 738.2"/></g>
<circle cx="217.9" cy="707.6" r="11.5" fill="#f4463a"/>
<circle cx="264" cy="726.9" r="27" fill="#f5f1f6"/><circle cx="264" cy="726.9" r="25" fill="url(#fbk)"/>
<path d="M264 711.5 A16.25 15.4 0 1 1 258.4 741.4 Q256 743.6 252.6 744.6 Q254.6 741.6 254 738.9 A16.25 15.4 0 0 1 264 711.5 Z" fill="url(#bub)"/>
<path d="M261.9 718.6 Q261.9 717.7 264 717.7 Q266.1 717.7 266.1 718.6 L265.2 731.8 Q265.1 732.7 264 732.7 Q262.9 732.7 262.8 731.8 Z" fill="#b262ea"/><circle cx="264" cy="735.3" r="2" fill="#b262ea"/>
<rect x="303.9" y="702.4" width="52.5" height="49" rx="1.5" fill="url(#spg)"/><rect x="303.9" y="702.4" width="52.5" height="1.2" fill="#e2e4e6"/><rect x="303.9" y="750" width="52.5" height="1.4" fill="#5c5e60"/>
<g transform="translate(329.8,726.5)"><circle r="21.5" fill="#262626"/><path d="M-1.5 -16 L-1.1 -19.4 L1.1 -19.4 L1.5 -16 Z" fill="#b4b5b6" transform="rotate(0)"/><path d="M-1.5 -16 L-1.1 -19.4 L1.1 -19.4 L1.5 -16 Z" fill="#b4b5b6" transform="rotate(15)"/><path d="M-1.5 -16 L-1.1 -19.4 L1.1 -19.4 L1.5 -16 Z" fill="#b4b5b6" transform="rotate(30)"/><path d="M-1.5 -16 L-1.1 -19.4 L1.1 -19.4 L1.5 -16 Z" fill="#b4b5b6" transform="rotate(45)"/><path d="M-1.5 -16 L-1.1 -19.4 L1.1 -19.4 L1.5 -16 Z" fill="#b4b5b6" transform="rotate(60)"/><path d="M-1.5 -16 L-1.1 -19.4 L1.1 -19.4 L1.5 -16 Z" fill="#b4b5b6" transform="rotate(75)"/><path d="M-1.5 -16 L-1.1 -19.4 L1.1 -19.4 L1.5 -16 Z" fill="#b4b5b6" transform="rotate(90)"/><path d="M-1.5 -16 L-1.1 -19.4 L1.1 -19.4 L1.5 -16 Z" fill="#b4b5b6" transform="rotate(105)"/><path d="M-1.5 -16 L-1.1 -19.4 L1.1 -19.4 L1.5 -16 Z" fill="#b4b5b6" transform="rotate(120)"/><path d="M-1.5 -16 L-1.1 -19.4 L1.1 -19.4 L1.5 -16 Z" fill="#b4b5b6" transform="rotate(135)"/><path d="M-1.5 -16 L-1.1 -19.4 L1.1 -19.4 L1.5 -16 Z" fill="#b4b5b6" transform="rotate(150)"/><path d="M-1.5 -16 L-1.1 -19.4 L1.1 -19.4 L1.5 -16 Z" fill="#b4b5b6" transform="rotate(165)"/><path d="M-1.5 -16 L-1.1 -19.4 L1.1 -19.4 L1.5 -16 Z" fill="#b4b5b6" transform="rotate(180)"/><path d="M-1.5 -16 L-1.1 -19.4 L1.1 -19.4 L1.5 -16 Z" fill="#b4b5b6" transform="rotate(195)"/><path d="M-1.5 -16 L-1.1 -19.4 L1.1 -19.4 L1.5 -16 Z" fill="#b4b5b6" transform="rotate(210)"/><path d="M-1.5 -16 L-1.1 -19.4 L1.1 -19.4 L1.5 -16 Z" fill="#b4b5b6" transform="rotate(225)"/><path d="M-1.5 -16 L-1.1 -19.4 L1.1 -19.4 L1.5 -16 Z" fill="#b4b5b6" transform="rotate(240)"/><path d="M-1.5 -16 L-1.1 -19.4 L1.1 -19.4 L1.5 -16 Z" fill="#b4b5b6" transform="rotate(255)"/><path d="M-1.5 -16 L-1.1 -19.4 L1.1 -19.4 L1.5 -16 Z" fill="#b4b5b6" transform="rotate(270)"/><path d="M-1.5 -16 L-1.1 -19.4 L1.1 -19.4 L1.5 -16 Z" fill="#b4b5b6" transform="rotate(285)"/><path d="M-1.5 -16 L-1.1 -19.4 L1.1 -19.4 L1.5 -16 Z" fill="#b4b5b6" transform="rotate(300)"/><path d="M-1.5 -16 L-1.1 -19.4 L1.1 -19.4 L1.5 -16 Z" fill="#b4b5b6" transform="rotate(315)"/><path d="M-1.5 -16 L-1.1 -19.4 L1.1 -19.4 L1.5 -16 Z" fill="#b4b5b6" transform="rotate(330)"/><path d="M-1.5 -16 L-1.1 -19.4 L1.1 -19.4 L1.5 -16 Z" fill="#b4b5b6" transform="rotate(345)"/><circle r="16.4" fill="url(#grg)"/><circle r="12.9" fill="#4b4c4d"/><path d="M0 -2.3 L13.4 -2.6 L13.4 2.6 L0 2.3 Z" fill="#b0b1b2" transform="rotate(0)"/><path d="M0 -2.3 L13.4 -2.6 L13.4 2.6 L0 2.3 Z" fill="#b0b1b2" transform="rotate(120)"/><path d="M0 -2.3 L13.4 -2.6 L13.4 2.6 L0 2.3 Z" fill="#b0b1b2" transform="rotate(240)"/><circle r="3" fill="#a8a9aa"/></g>
<circle cx="350" cy="707.7" r="11.5" fill="#f4463a"/>
<rect x="369.4" y="703.4" width="52.9" height="45.6" rx="3" fill="#0b0b0b"/><rect x="369.9" y="703.4" width="51.9" height="0.9" rx="0.4" fill="#aebccc"/><rect x="372.6" y="706.6" width="46.5" height="39.2" rx="1.5" fill="#1d2221"/>
<g stroke="#3a4341" stroke-width="0.6"><path d="M374.0 707.4 L374.0 745"/><path d="M378.4 707.4 L378.4 745"/><path d="M382.8 707.4 L382.8 745"/><path d="M387.2 707.4 L387.2 745"/><path d="M391.6 707.4 L391.6 745"/><path d="M396.0 707.4 L396.0 745"/><path d="M400.4 707.4 L400.4 745"/><path d="M404.8 707.4 L404.8 745"/><path d="M409.2 707.4 L409.2 745"/><path d="M413.6 707.4 L413.6 745"/><path d="M418.0 707.4 L418.0 745"/><path d="M373.4 708.4 L418.4 708.4"/><path d="M373.4 712.9 L418.4 712.9"/><path d="M373.4 717.4 L418.4 717.4"/><path d="M373.4 721.9 L418.4 721.9"/><path d="M373.4 726.4 L418.4 726.4"/><path d="M373.4 730.9 L418.4 730.9"/><path d="M373.4 735.4 L418.4 735.4"/><path d="M373.4 739.9 L418.4 739.9"/><path d="M373.4 744.4 L418.4 744.4"/></g>
<path d="M378.6 730 L383 729.6 L385.2 727.4 L387.6 729.8 L390.4 731 L391.6 712 L393 724 L394.4 735 L395.4 729.6 L399 729.4 L401.4 727 L403.8 725.2 L406.4 727.6 L408.6 730.8 L411.6 728.4 L414 729.8 L417 730.6" fill="none" stroke="#8fd8d2" stroke-width="0.9" stroke-linejoin="round"/><path d="M391.6 712 L393 724 L394.4 735" fill="none" stroke="#d8e4e4" stroke-width="0.7"/>
<rect x="435.7" y="703.4" width="52.7" height="45.6" rx="3" fill="#0b0b0b"/><rect x="436.2" y="703.4" width="51.7" height="0.9" rx="0.4" fill="#b8bcc4"/><rect x="438.7" y="706.4" width="46.7" height="39.6" rx="2" fill="#262626"/>
<path d="M442.4 711.5 L449 714.4 L442.4 717.3" fill="none" stroke="#ffffff" stroke-width="1.9"/><rect x="449.8" y="718.6" width="8" height="2" fill="#ffffff"/>
<circle cx="461.9" cy="763.7" r="1.9" fill="#0a0a0a"/>
<rect x="510.3" y="710.4" width="1" height="37.4" fill="#563828"/>
<g transform="translate(0,0)"><path d="M534.1 704.9 L574.5 698.4 L582.4 746.5 L542.3 754.4 Z" fill="#38383a"/><path d="M569.6 703.1 L581.4 705.4 L586.4 739.5 L578 746.2 L575.2 740.4 Z" fill="url(#vsp)"/><path d="M544.8 740.3 L575.2 740.4 L586.4 739.5 L578 746.2 Z" fill="#8b5ecb"/><path d="M559.4 711.3 L568.1 715.3 L568.5 731.6 L563.2 735.6 L549.6 726 L544.6 732.4 L542.3 731.2 L542.3 720.4 L544.6 719.2 L549.4 724 Z M561.6 717.6 L553.6 725 L562 730.6 Z M544.4 722.6 L544.4 729.4 L547.6 725.6 Z" fill="#b283f0" fill-rule="evenodd"/><path d="M563.2 735.6 L568.5 731.6 L568.1 715.3 L564.6 716.6 L565 731.6 Z" fill="#9468d6"/></g>
<g transform="translate(133.3,0)"><path d="M534.1 704.9 L574.5 698.4 L582.4 746.5 L542.3 754.4 Z" fill="#38383a"/><path d="M569.6 703.1 L581.4 705.4 L586.4 739.5 L578 746.2 L575.2 740.4 Z" fill="url(#vsp)"/><path d="M544.8 740.3 L575.2 740.4 L586.4 739.5 L578 746.2 Z" fill="#8b5ecb"/><path d="M559.4 711.3 L568.1 715.3 L568.5 731.6 L563.2 735.6 L549.6 726 L544.6 732.4 L542.3 731.2 L542.3 720.4 L544.6 719.2 L549.4 724 Z M561.6 717.6 L553.6 725 L562 730.6 Z M544.4 722.6 L544.4 729.4 L547.6 725.6 Z" fill="#b283f0" fill-rule="evenodd"/><path d="M563.2 735.6 L568.5 731.6 L568.1 715.3 L564.6 716.6 L565 731.6 Z" fill="#9468d6"/></g>
<circle cx="557.8" cy="763.8" r="1.9" fill="#0a0a0a"/>
<path d="M600.4 705.5 L640.8 698.6 L648.3 747.6 L607.7 754.9 Z" fill="#fcfcfc"/>
<g stroke="#d4d4da" stroke-width="0.7"><path d="M602.2 710.4 L641.8 703.6"/><path d="M602.8 714.4 L642.4 707.6"/><path d="M603.4 718.5 L643.0 711.7"/><path d="M604.1 722.5 L643.7 715.8"/><path d="M604.7 726.6 L644.3 719.8"/><path d="M605.3 730.6 L644.9 723.9"/><path d="M605.9 734.7 L645.5 727.9"/><path d="M606.5 738.8 L646.1 732.0"/><path d="M607.2 742.8 L646.8 736.0"/><path d="M607.8 746.9 L647.4 740.1"/><path d="M608.4 750.9 L648.0 744.1"/></g>
<path d="M605.2 704.8 L612.6 754" stroke="#f4c4b8" stroke-width="0.8"/>
<path d="M643.6 699.4 L647 700.4 L634.6 744 L631.4 743 Z" fill="url(#pen)"/><path d="M631.4 743 L634.6 744 L631.8 750 L630.4 749.4 Z" fill="#c8ccd0"/><path d="M630.4 749.4 L631.8 750 L629.4 754.6 Z" fill="#3a3f45"/><path d="M641.6 706.6 L644.2 707.4 L638.8 727 L636.4 726.2 Z" fill="#cfe4f8"/>
<g transform="translate(756.1,726.9) scale(1)"><path d="M0 -31.10 L28.15 -15.55 L0 0 L-28.15 -15.55 Z" fill="#fa3a0a"/><path d="M-28.15 -15.55 L0 0 L0 31.10 L-28.15 15.55 Z" fill="#d01600"/><path d="M28.15 -15.55 L0 0 L0 31.10 L28.15 15.55 Z" fill="#ff4c14"/><path d="M-22.99 12.70 L-22.99 -12.70 L0.00 -25.40 L22.99 -12.70 L22.99 12.70 L0.00 25.40 L0.00 19.70 L17.83 9.85 L17.83 -9.85 L0.00 -19.70 L-17.83 -9.85 L-17.83 15.55 Z" fill="#ffffff"/><path d="M-13.03 7.20 L-13.03 -7.20 L0.00 -14.40 L13.03 -7.20 L13.03 7.20 L0.00 14.40 Z" fill="#ffffff"/><path d="M-13.03 0 L-8 0 L-8 21.2 L-13.03 18.4 Z" fill="#ffffff"/><g transform="translate(0,-0.3)"><path d="M0 -8.2 L7.5 -4.1 L0 0 L-7.5 -4.1 Z" fill="#fa3a0a"/><path d="M-7.5 -4.1 L0 0 L0 8.2 L-7.5 4.1 Z" fill="#d01600"/><path d="M7.5 -4.1 L0 0 L0 8.2 L7.5 4.1 Z" fill="#ff4c14"/></g></g>
<circle cx="756" cy="763.7" r="1.9" fill="#0a0a0a"/>
<rect x="803.9" y="700" width="1" height="57.6" fill="#563828"/>
<path d="M837 697.5 L850 697.4 Q856 700 860 705.6 L860 714 L837 714 Z" fill="#f6f8fa"/><rect x="839.6" y="699.4" width="4.6" height="1.4" fill="#7fa6d2"/>
<path d="M829 706 L838.4 708.3 L851.1 700.8 L861.9 707.8 L874 704 L874.6 725 L850 735 L832 724 Z" fill="#f8d038"/>
<path d="M829.6 707 L838.4 709.4 L848.6 703.4 L850.6 713 L833 717.4 Z" fill="#fbe9b0" opacity="0.75"/>
<path d="M869.4 711.6 L877.3 716.7 L873.6 724.7 L868 722 Z" fill="#ebc88c"/>
<path d="M833 715.6 L852 711.8 L870 716 L870 724 L849 732.6 L833 725.6 Z" fill="#f4cc30"/><path d="M833 715.6 L849 721.6 L849 732.6 L833 725.6 Z" fill="#f7d848"/><path d="M849 721.6 L870 716 L870 724 L849 732.6 Z" fill="#efc22a"/>
<path d="M833.3 733 L848 740 L848 754.7 L833.3 742.5 Z" fill="#8a531c"/><path d="M848 740 L871.3 736.9 L871.3 743.4 L848 754.7 Z" fill="#90581f"/><path d="M838.4 737.3 L848 733 L855 741.6 L848 743.6 Z" fill="#8a531c"/>
<path d="M824.8 725.6 L832.3 721.9 L847.3 732.7 L838.4 737.3 Z" fill="#d59c64"/>
<path d="M849.7 734 L873.1 726.6 L876 732.2 L855.3 742 Z" fill="#cd955a"/>
<rect x="888.9" y="710.8" width="58.2" height="32.2" fill="#fdfdfd"/><rect x="888.9" y="710.8" width="58.2" height="2.6" fill="#f0f0f0"/><rect x="888.9" y="713.4" width="7.6" height="29.6" fill="#f6f6f6"/><rect x="933" y="713.4" width="14.1" height="29.6" fill="#f4f4f4"/>
<rect x="897.6" y="715.4" width="30" height="0.8" fill="#d4d4d4"/><rect x="897.6" y="716.8" width="5" height="1.4" fill="#7fa2d4"/><rect x="905.6" y="716.8" width="3" height="1.4" fill="#58c4c0"/><rect x="897.6" y="727.8" width="12" height="1.6" fill="#8cd0d4"/><rect x="910" y="727.8" width="8" height="1.6" fill="#7fb4c8"/><rect x="897.6" y="733.4" width="24" height="1" fill="#d4e6e8"/><rect x="921.6" y="733" width="2.4" height="1.8" fill="#58b4c4"/><path d="M898 738 L924 719" stroke="#e6e6e6" stroke-width="0.5"/><rect x="934.6" y="715" width="8" height="0.8" fill="#cfcfcf"/><rect x="934.6" y="717.4" width="10" height="0.8" fill="#d8d8d8"/><rect x="934.6" y="719.8" width="7" height="0.8" fill="#d8d8d8"/><rect x="934.6" y="724.4" width="11" height="0.6" fill="#e0e0e0"/><rect x="934.6" y="730" width="11" height="0.6" fill="#e0e0e0"/>
<g transform="translate(936.5,745.3) scale(0.37)"><path d="M0 -31.10 L28.15 -15.55 L0 0 L-28.15 -15.55 Z" fill="#fa3a0a"/><path d="M-28.15 -15.55 L0 0 L0 31.10 L-28.15 15.55 Z" fill="#d01600"/><path d="M28.15 -15.55 L0 0 L0 31.10 L28.15 15.55 Z" fill="#ff4c14"/><path d="M-22.99 12.70 L-22.99 -12.70 L0.00 -25.40 L22.99 -12.70 L22.99 12.70 L0.00 25.40 L0.00 19.70 L17.83 9.85 L17.83 -9.85 L0.00 -19.70 L-17.83 -9.85 L-17.83 15.55 Z" fill="#ffffff"/><path d="M-13.03 7.20 L-13.03 -7.20 L0.00 -14.40 L13.03 -7.20 L13.03 7.20 L0.00 14.40 Z" fill="#ffffff"/><path d="M-13.03 0 L-8 0 L-8 21.2 L-13.03 18.4 Z" fill="#ffffff"/><g transform="translate(0,-0.3)"><path d="M0 -8.2 L7.5 -4.1 L0 0 L-7.5 -4.1 Z" fill="#fa3a0a"/><path d="M-7.5 -4.1 L0 0 L0 8.2 L-7.5 4.1 Z" fill="#d01600"/><path d="M7.5 -4.1 L0 0 L0 8.2 L7.5 4.1 Z" fill="#ff4c14"/></g></g>
<rect x="954.9" y="713.8" width="46" height="25.8" fill="#fdfdfd"/><rect x="954.9" y="713.8" width="46" height="1.6" fill="#eeeeee"/><rect x="954.9" y="715.4" width="4.6" height="24.2" fill="#f2f2f2"/><rect x="960" y="732.6" width="23" height="0.8" fill="#c4c4c4"/><rect x="966" y="718" width="8" height="0.6" fill="#d4d4d4"/><rect x="966" y="721" width="5" height="0.6" fill="#d4d4d4"/><rect x="966" y="724" width="6" height="0.6" fill="#d4d4d4"/><rect x="966" y="727" width="9" height="0.6" fill="#d4d4d4"/>
<path d="M993.8 737 L1000 736 L1000 756 L995.4 755.4 Z" fill="#2f2f31"/><path d="M997 743.6 L1000 742 L1000 750 L997 748 Z" fill="#9a72d8"/>
</svg>
<span class="t" style="left:214.6px;top:700.1px;font-size:13px;line-height:16px;color:#fff;-webkit-text-stroke:0.3px #fff">6</span>
<span class="t" style="left:346.3px;top:700px;font-size:13px;line-height:16px;color:#fff;-webkit-text-stroke:0.35px #fff">1</span>
</div>
</body>
</html>
